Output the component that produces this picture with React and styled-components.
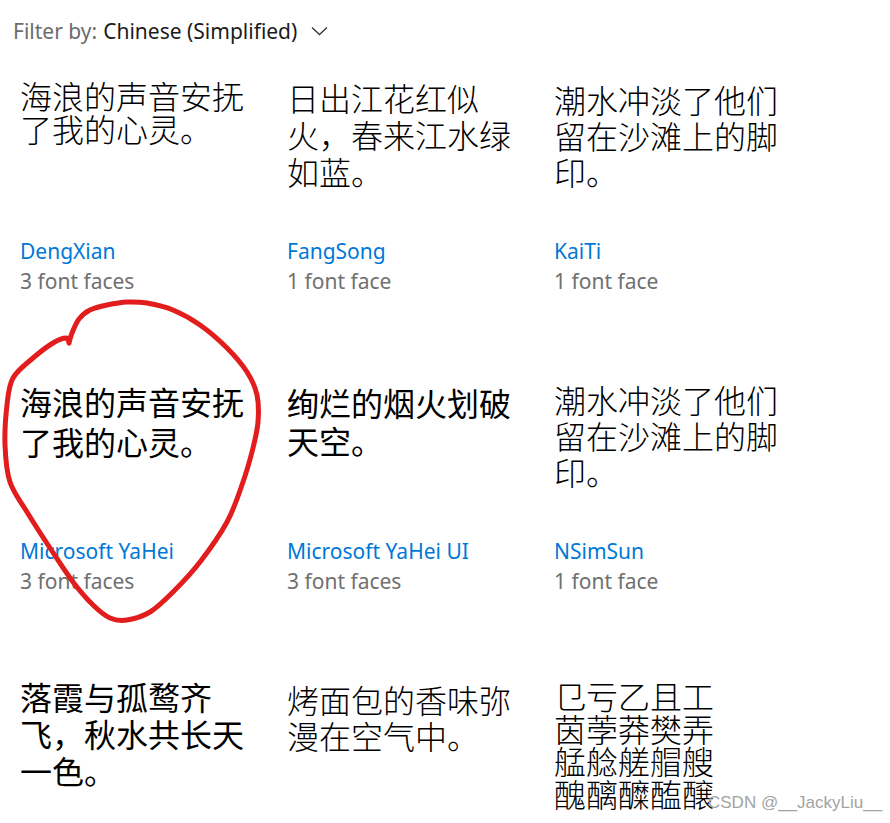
import React from "react";
import styled, { createGlobalStyle } from "styled-components";

const Global = createGlobalStyle`
  html, body { margin: 0; padding: 0; background: #ffffff; overflow: hidden; }
  body { font-family: "Noto Sans", "Noto Sans CJK SC", sans-serif; }
`;

const Page = styled.div`
  position: relative;
  width: 890px;
  height: 823px;
  overflow: hidden;
  background: #fff;
`;

const Header = styled.div`
  display: flex;
  align-items: center;
  gap: 6px;
  padding: 16px 0 0 13px;
  height: 30px;
  font-size: 21px;
  line-height: 30px;
`;

const Label = styled.span`
  color: #6b6b6b;
`;

const Value = styled.span`
  color: #1b1b1b;
`;

const Chevron = styled.svg`
  margin-left: 8px;
  width: 17px;
  height: 10px;
`;

const Grid = styled.div`
  display: grid;
  grid-template-columns: repeat(3, 267px);
  grid-auto-rows: 300px;
  margin-top: 30px;
  padding-left: 20px;
`;

const Card = styled.div`
  display: flex;
  flex-direction: column;
`;

const Sample = styled.div`
  box-sizing: border-box;
  height: 160px;
  width: 240px;
  padding-top: ${(p) => p.$pt}px;
  font-family: "Noto Sans CJK SC", sans-serif;
  font-size: 32px;
  line-height: ${(p) => p.$lh}px;
  font-weight: ${(p) => p.$w || 400};
  color: #000;
  white-space: ${(p) => (p.$pre ? "pre-line" : "normal")};
`;

const Name = styled.div`
  font-size: 21px;
  line-height: 30px;
  color: #0078d7;
`;

const Faces = styled.div`
  font-size: 21px;
  line-height: 30px;
  color: #707070;
`;

const Loop = styled.svg`
  position: absolute;
  left: 0;
  top: 0;
  pointer-events: none;
`;

const Watermark = styled.div`
  position: absolute;
  left: 708px;
  top: 793px;
  font-family: "Liberation Sans", Arial, sans-serif;
  font-size: 17px;
  line-height: 20px;
  color: #a3a3a3;
  white-space: nowrap;
`;

const fonts = [
  { text: "海浪的声音安抚了我的心灵。", name: "DengXian", faces: "3 font faces", lh: 33, pt: 3, w: 300 },
  { text: "日出江花红似火，春来江水绿如蓝。", name: "FangSong", faces: "1 font face", lh: 37, pt: 3, w: 200 },
  { text: "潮水冲淡了他们留在沙滩上的脚印。", name: "KaiTi", faces: "1 font face", lh: 36, pt: 5, w: 300 },
  { text: "海浪的声音安抚了我的心灵。", name: "Microsoft YaHei", faces: "3 font faces", lh: 40, pt: 5, w: 400 },
  { text: "绚烂的烟火划破天空。", name: "Microsoft YaHei UI", faces: "3 font faces", lh: 38, pt: 7, w: 400 },
  { text: "潮水冲淡了他们留在沙滩上的脚印。", name: "NSimSun", faces: "1 font face", lh: 36, pt: 5, w: 200 },
  { text: "落霞与孤鹜齐飞，秋水共长天一色。", name: "SimHei", faces: "1 font face", lh: 37, pt: 2, w: 400 },
  { text: "烤面包的香味弥漫在空气中。", name: "SimSun", faces: "1 font face", lh: 36, pt: 5, w: 200 },
  { text: "㔾亏乙且工\n茵荸莽樊弄\n艋艌艖艒艘\n醜醨醾醢醸", name: "SimSun-ExtB", faces: "1 font face", lh: 32.5, pt: 3, pre: true, w: 200 },
];

const loopPts = [
  [69, 343], [72, 333], [79, 319], [90, 310], [107, 305], [127, 302], [147, 303],
  [173, 310], [200, 325], [227, 348], [247, 372], [257, 395], [258, 422], [253, 448],
  [243, 482], [227, 522], [200, 562], [173, 592], [150, 612], [127, 620], [110, 618],
  [93, 605], [73, 582], [50, 548], [27, 512], [10, 482], [5, 445], [7, 405], [13, 378],
  [33, 358], [53, 343], [66, 338], [69, 343],
];

function smoothPath(pts) {
  let d = `M${pts[0][0]},${pts[0][1]}`;
  for (let i = 0; i < pts.length - 1; i++) {
    const p0 = pts[i - 1] || pts[i];
    const p1 = pts[i];
    const p2 = pts[i + 1];
    const p3 = pts[i + 2] || p2;
    const c1x = p1[0] + (p2[0] - p0[0]) / 6;
    const c1y = p1[1] + (p2[1] - p0[1]) / 6;
    const c2x = p2[0] - (p3[0] - p1[0]) / 6;
    const c2y = p2[1] - (p3[1] - p1[1]) / 6;
    d += ` C${c1x.toFixed(1)},${c1y.toFixed(1)} ${c2x.toFixed(1)},${c2y.toFixed(1)} ${p2[0]},${p2[1]}`;
  }
  return d;
}

export default function App() {
  return (
    <Page>
      <Global />
      <Header>
        <Label>Filter by:</Label>
        <Value>Chinese (Simplified)</Value>
        <Chevron viewBox="0 0 17 10">
          <polyline points="1,1.5 8.5,8.5 16,1.5" fill="none" stroke="#333" strokeWidth="1.3" />
        </Chevron>
      </Header>
      <Grid>
        {fonts.map((f, i) => (
          <Card key={i}>
            <Sample $lh={f.lh} $pt={f.pt} $w={f.w} $pre={f.pre}>
              {f.text}
            </Sample>
            <Name>{f.name}</Name>
            <Faces>{f.faces}</Faces>
          </Card>
        ))}
      </Grid>
      <Loop width="890" height="823" viewBox="0 0 890 823">
        <path
          d={smoothPath(loopPts)}
          fill="none"
          stroke="#e21d1d"
          strokeWidth="5"
          strokeLinecap="round"
          strokeLinejoin="round"
        />
      </Loop>
      <Watermark>CSDN @__JackyLiu__</Watermark>
    </Page>
  );
}
